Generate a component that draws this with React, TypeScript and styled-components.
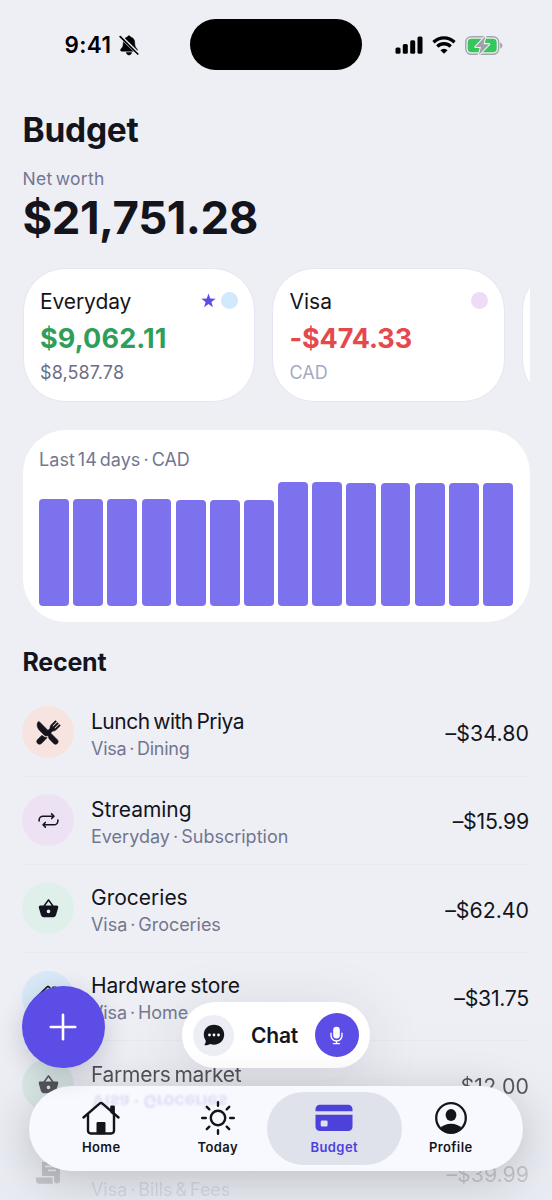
import React from "react";
import styled, { createGlobalStyle } from "styled-components";
import { IoRestaurant, IoRepeatOutline, IoBasket, IoHome } from "react-icons/io5";

const GlobalStyle = createGlobalStyle`
  * { box-sizing: border-box; }
  body { margin: 0; background: #eeeff5; font-family: Inter, "Liberation Sans", sans-serif; color: #14151c; }
`;

const Screen = styled.main`
  position: relative;
  width: 552px;
  height: 1200px;
  overflow: hidden;
  background: #eeeff5;
`;

const Label = styled.span<{ $size: number; $line: number; $color?: string; $weight?: number; $track?: number; $space?: number }>`
  display: block;
  white-space: nowrap;
  min-height: ${(p) => p.$line}px;
  font-size: ${(p) => p.$size}px;
  line-height: ${(p) => p.$line}px;
  color: ${(p) => p.$color ?? "#14151c"};
  font-weight: ${(p) => p.$weight ?? 400};
  letter-spacing: ${(p) => p.$track ?? 0}px;
  word-spacing: ${(p) => p.$space ?? -2}px;
  font-feature-settings: "calt" 0;
`;

/* Status bar */
const StatusBar = styled.header`
  display: grid;
  grid-template-columns: 190px 172px 190px;
  align-items: center;
  height: 89px;
`;
const StatusLeft = styled.div`
  display: flex;
  align-items: center;
  gap: 7.5px;
  padding-left: 64.5px;
  padding-top: 1px;
`;
const Island = styled.div`
  height: 51px;
  border-radius: 26px;
  background: #000;
`;
const StatusRight = styled.div`
  display: flex;
  align-items: center;
  gap: 9px;
  padding-left: 33px;
  padding-top: 1px;
`;

/* Page */
const Content = styled.div`
  display: flex;
  flex-direction: column;
  padding: 19.4px 22.5px 0;
`;
const Heading = styled.h1`
  margin: 0 0 14.2px;
  font-size: 33.5px;
  line-height: 44px;
  font-weight: 660;
  letter-spacing: -0.25px;
`;
const NetWorth = styled.section`
  display: flex;
  flex-direction: column;
  gap: 2.9px;
`;
const Accounts = styled.section`
  display: flex;
  gap: 17px;
  margin-top: 24.2px;
  overflow: hidden;
`;
const AccountCard = styled.article`
  flex: 0 0 232.5px;
  height: 134px;
  padding: 20px 16px 0 16.5px;
  border: 1.5px solid #e4e6f1;
  border-radius: 42px;
  background: #fff;
`;
const AccountHead = styled.div`
  display: flex;
  justify-content: space-between;
  align-items: center;
  margin-bottom: 7px;
`;
const Marks = styled.div`
  display: flex;
  align-items: center;
  gap: 5.5px;
  padding-bottom: 3px;
`;
const Dot = styled.i<{ $color: string }>`
  width: 17px;
  height: 17px;
  border-radius: 50%;
  background: ${(p) => p.$color};
`;
const AccountSub = styled.div`
  margin-top: 5px;
`;

const ChartCard = styled.section`
  height: 191.4px;
  margin-top: 28.6px;
  padding: 17.6px 16.6px 0;
  border-radius: 43px;
  background: #fff;
`;
const Bars = styled.div`
  display: flex;
  align-items: flex-end;
  gap: 4.2px;
  height: 123.5px;
  margin-top: 10.2px;
`;
const Bar = styled.div`
  flex: 1;
  border-radius: 4px;
  background: #7d72ed;
`;

const SectionTitle = styled.h2`
  margin: 24.4px 0 10.6px;
  font-size: 25px;
  line-height: 32px;
  font-weight: 660;
  letter-spacing: -0.25px;
`;
const Row = styled.div<{ $fade?: number }>`
  display: flex;
  align-items: flex-start;
  height: 88.2px;
  flex: none;
  border-bottom: 1px solid #e8e9ef;
  opacity: ${(p) => p.$fade ?? 1};
`;
const RowIcon = styled.div<{ $color: string }>`
  display: flex;
  align-items: center;
  justify-content: center;
  width: 52px;
  height: 52px;
  margin: 17.4px 17px 0 -0.5px;
  border-radius: 50%;
  background: ${(p) => p.$color};
  color: #14151c;
`;
const RowText = styled.div`
  flex: 1;
  padding-top: 19.2px;
`;
const RowSub = styled.div`
  margin-top: 1px;
`;
const RowAmount = styled.div`
  padding: 30.6px 0.5px 0 0;
`;

/* Floating layer */
const BottomFade = styled.div`
  position: absolute;
  inset: 1000px 0 0;
  background: linear-gradient(rgba(228, 231, 240, 0), rgba(224, 228, 236, 0.4));
`;
const Fab = styled.button`
  position: absolute;
  left: 22px;
  top: 985.5px;
  display: flex;
  align-items: center;
  justify-content: center;
  width: 82.6px;
  height: 82.6px;
  padding: 0;
  border: 0;
  border-radius: 50%;
  background: #5b4de6;
  box-shadow: 0 8px 26px rgba(40, 42, 70, 0.2);
`;
const ChatPill = styled.div`
  position: absolute;
  left: 182px;
  top: 1002px;
  display: flex;
  align-items: center;
  justify-content: space-between;
  width: 188px;
  height: 66px;
  padding: 0 11px;
  border-radius: 33px;
  background: #fff;
  box-shadow: 0 8px 60px rgba(40, 42, 60, 0.12);
`;
const ChatLabel = styled.div`
  padding-top: 2px;
`;
const RoundButton = styled.div<{ $size: number; $color: string }>`
  display: flex;
  align-items: center;
  justify-content: center;
  width: ${(p) => p.$size}px;
  height: ${(p) => p.$size}px;
  border-radius: 50%;
  background: ${(p) => p.$color};
`;
const TabBar = styled.nav`
  position: absolute;
  left: 29px;
  top: 1086px;
  display: grid;
  grid-template-columns: repeat(4, 116.5px);
  justify-content: center;
  width: 494px;
  height: 85px;
  padding-top: 6px;
  border-radius: 42.5px;
  background: #f8f9fe;
  box-shadow: 0 8px 44px rgba(30, 32, 42, 0.22);
`;
const Reflection = styled.span`
  position: absolute;
  left: 62.5px;
  top: 3px;
  font-size: 18px;
  line-height: 24px;
  font-weight: 700;
  color: #dedff6;
  transform: scaleY(-1);
  filter: blur(0.8px);
  white-space: nowrap;
  letter-spacing: -0.2px;
`;
const Tab = styled.div<{ $active?: boolean }>`
  position: relative;
  display: flex;
  flex-direction: column;
  align-items: center;
  height: 73px;
  margin: 0 ${(p) => (p.$active ? -9 : 0)}px;
  padding-top: 8.4px;
  gap: 1.8px;
  border-radius: 36.5px;
  background: ${(p) => (p.$active ? "#dfe1eb" : "transparent")};
  color: ${(p) => (p.$active ? "#4d41dc" : "#14151c")};
`;
const TabIcon = styled.div`
  display: flex;
  align-items: center;
  height: 36px;
`;
const TabLabel = styled.span`
  font-size: 13px;
  line-height: 18px;
  font-weight: 600;
  letter-spacing: 0.4px;
`;

const BellOff = () => (
  <svg width="20" height="21" viewBox="0 0 20 21">
    <path d="M10 .8c-.9 0-1.500.6-1.600 1.300C5.600 2.900 4.300 5 4.300 7.500c0 4-1 5-2.200 6.300-.9 1-.8 2.400.6 2.400h14.600c1.400 0 1.500-1.400.6-2.400-1.200-1.300-2.200-2.300-2.200-6.300 0-2.500-1.300-4.600-4.100-5.400C11.500 1.400 10.900.8 10 .8zM7.300 17.500h5.400c-.2 1.500-1.300 2.500-2.700 2.500s-2.500-1-2.700-2.500z" fill="#000" stroke="#000" strokeWidth="0.5" />
    <path d="M1.800 1.700 19.600 19" stroke="#eeeff5" strokeWidth="3.4" />
    <path d="M1.200 1.700 18.800 19" stroke="#000" strokeWidth="1.7" strokeLinecap="round" />
  </svg>
);
const Signal = () => (
  <svg width="28" height="18" viewBox="0 0 28 18">
    <rect x="0.5" y="11.500" width="5" height="6.300" rx="1.5" />
    <rect x="7.8" y="8" width="5" height="9.800" rx="1.5" />
    <rect x="15.2" y="4.200" width="5" height="13.600" rx="1.5" />
    <rect x="22.5" y="0.500" width="5" height="17.300" rx="1.5" />
  </svg>
);
const Wifi = () => (
  <svg width="24" height="18" viewBox="0 0 24 18" fill="none" stroke="#000" strokeWidth="3.3">
    <path d="M1.500 6.200a15 15 0 0 1 21 0" />
    <path d="M5.300 10.500a9.500 9.500 0 0 1 13.400 0" />
    <path d="M12 17.800 8.400 14.200a5 5 0 0 1 7.200 0z" fill="#000" stroke="none" />
  </svg>
);
const Battery = () => (
  <svg width="38" height="19" viewBox="0 0 38 19">
    <rect x="0.7" y="0.7" width="33" height="17.6" rx="5.6" fill="none" stroke="#a5a6ab" strokeWidth="1.4" />
    <path d="M35.200 6.500c1.500.5 2.200 1.600 2.200 3s-.7 2.500-2.200 3z" fill="#a5a6ab" />
    <rect x="2.7" y="2.7" width="29" height="13.6" rx="3.8" fill="#34c759" />
    <path d="M20.300.3 10.400 10.900h5.600L13.900 18.700 24.200 8.200H18.500z" fill="#9fa1a6" stroke="#eeeff5" strokeWidth="2.2" strokeLinejoin="round" paintOrder="stroke" />
  </svg>
);
const Star = () => (
  <svg width="15" height="15" viewBox="0 0 24 24" fill="#5b4de6">
    <path d="M12 .8 14.800 8.900 23.500 9.100 16.600 14.300 19.100 22.700 12 17.700 4.900 22.700 7.400 14.300.5 9.100 9.200 8.900z" />
  </svg>
);
const Scroll = () => (
  <svg width="24" height="24" viewBox="0 0 24 24" fill="#14151c">
    <path fillRule="evenodd" d="M6 1h18v18.500a3 3 0 0 1-6 0V15H6zM9 4.500v1.800h11V4.500zm3 4v1.800h8V8.500z" />
    <path d="M0 16.500h16.500v3.500c0 1 .3 2 .9 2.700H3.500A3.500 3.500 0 0 1 0 19.200z" />
  </svg>
);
const ChatBubble = () => (
  <svg width="22" height="22" viewBox="0 0 22 22">
    <path d="M11 .8C5.200.8.800 5 .8 10.500c0 2.300.7 4.200 1.900 5.900.2 1.500-.2 2.700-1 3.800-.4.600-.1 1.100.6 1.100 1.900 0 3.500-.4 4.800-1.300 1.200.5 2.500.7 3.900.7 5.800 0 10.200-4.400 10.200-10.100S16.800.8 11 .8z" fill="#14151c" />
    <circle cx="6.5" cy="11" r="1.4" fill="#fff" />
    <circle cx="11" cy="11" r="1.4" fill="#fff" />
    <circle cx="15.5" cy="11" r="1.4" fill="#fff" />
  </svg>
);
const Mic = () => (
  <svg width="13" height="19" viewBox="0 0 13 19" fill="none" stroke="#fff" strokeWidth="1.4" strokeLinecap="round">
    <rect x="3.2" y="0.7" width="6.6" height="11.8" rx="3.3" fill="#fff" stroke="none" />
    <path d="M1 7.200V9.500a5.500 5.500 0 0 0 11 0V7.200M6.500 15v2.600M3.500 17.600h6" />
  </svg>
);
const HomeTab = () => (
  <svg width="38" height="34" viewBox="0 0 38 34" fill="none" stroke="#14151c" strokeWidth="2.4" strokeLinecap="round" strokeLinejoin="round">
    <path d="M1.500 16.500 17.500 2.600a2.300 2.300 0 0 1 3 0L36.500 16.500" />
    <path d="M6 13.500v16.300a2.700 2.700 0 0 0 2.700 2.700h20.600a2.700 2.700 0 0 0 2.700-2.700V13.500" />
    <path d="M29.400 5.800v5l2.300 2V5.800z" fill="#14151c" />
    <path d="M15.700 32V22.300h6.600V32z" fill="#14151c" />
  </svg>
);
const SunTab = () => (
  <svg width="36" height="36" viewBox="0 0 36 36" fill="none" stroke="#14151c" strokeWidth="2.4" strokeLinecap="round">
    <circle cx="18" cy="18" r="7.2" />
    <path d="M18 2.200v3.600M18 30.200v3.600M2.200 18h3.600M30.200 18h3.600M6.800 6.800l2.500 2.500M26.700 26.700l2.500 2.500M6.800 29.200l2.500-2.500M26.700 9.300l2.500-2.500" />
  </svg>
);
const CardTab = () => (
  <svg width="38" height="28" viewBox="0 0 38 28" fill="#4d41dc">
    <path d="M.5 7.200V5A4.300 4.300 0 0 1 4.800.7h28.400A4.300 4.300 0 0 1 37.500 5v2.200z" />
    <path fillRule="evenodd" d="M.5 10.800h37v12a4.300 4.300 0 0 1-4.300 4.300H4.800A4.300 4.300 0 0 1 .5 22.800zM7 16.400a1.300 1.300 0 0 0-1.300 1.300v3.500A1.300 1.300 0 0 0 7 22.500h4.300a1.300 1.300 0 0 0 1.300-1.300v-3.500a1.300 1.300 0 0 0-1.300-1.300z" />
  </svg>
);
const ProfileTab = () => (
  <svg width="34" height="34" viewBox="0 0 34 34">
    <circle cx="17" cy="17" r="14.8" fill="none" stroke="#14151c" strokeWidth="2.3" />
    <ellipse cx="17" cy="14" rx="5.4" ry="6.1" fill="#14151c" />
    <path d="M6.300 27.300C8.500 24.200 12.500 22.700 17 22.700s8.500 1.500 10.700 4.600A15 15 0 0 1 17 32a15 15 0 0 1-10.700-4.700z" fill="#14151c" />
  </svg>
);

const bars = [106.3, 106.3, 106.3, 106.3, 105.7, 105.7, 105.7, 123.5, 123.5, 123, 123, 122.5, 122.5, 122.5];

type Entry = {
  title: string;
  sub: string;
  amount: string;
  color: string;
  icon: React.ReactNode;
  titleTrack: number;
  subTrack: number;
  amountTrack: number;
  fade?: number;
};

const rows: Entry[] = [
  { title: "Lunch with Priya", sub: "Visa · Dining", amount: "–$34.80", color: "#f7e4e0", icon: <IoRestaurant size={25} strokeWidth={12} />, titleTrack: -0.5, subTrack: -0.25, amountTrack: 0.1 },
  { title: "Streaming", sub: "Everyday · Subscription", amount: "–$15.99", color: "#ece2f4", icon: <IoRepeatOutline size={25} />, titleTrack: -0.05, subTrack: 0, amountTrack: -0.2 },
  { title: "Groceries", sub: "Visa · Groceries", amount: "–$62.40", color: "#dfefea", icon: <IoBasket size={25} />, titleTrack: 0, subTrack: -0.05, amountTrack: 0 },
  { title: "Hardware store", sub: "Visa · Home", amount: "–$31.75", color: "#d8e8f6", icon: <IoHome size={26} />, titleTrack: -0.15, subTrack: -0.1, amountTrack: -0.3 },
  { title: "Farmers market", sub: "", amount: "–$12.00", color: "#d3e6df", icon: <IoBasket size={25} />, titleTrack: -0.28, subTrack: 0, amountTrack: 0.1, fade: 0.84 },
  { title: "", sub: "Visa · Bills & Fees", amount: "–$39.99", color: "transparent", icon: <Scroll />, titleTrack: 0, subTrack: -0.05, amountTrack: 0, fade: 0.27 },
];

export default function App() {
  return (
    <Screen>
      <GlobalStyle />
      <StatusBar>
        <StatusLeft>
          <Label $size={22.5} $line={28} $weight={570} $color="#000" $track={0.4}>9:41</Label>
          <BellOff />
        </StatusLeft>
        <Island />
        <StatusRight>
          <Signal />
          <Wifi />
          <Battery />
        </StatusRight>
      </StatusBar>
      <Content>
        <Heading>Budget</Heading>
        <NetWorth>
          <Label $size={17.5} $line={24} $color="#73768f" $track={0.3}>Net worth</Label>
          <Label $size={45.5} $line={50} $weight={680} $track={-0.5}>$21,751.28</Label>
        </NetWorth>
        <Accounts>
          <AccountCard>
            <AccountHead>
              <Label $size={21} $line={26} $track={-0.1}>Everyday</Label>
              <Marks><Star /><Dot $color="#d2e8fb" /></Marks>
            </AccountHead>
            <Label $size={27} $line={34} $weight={680} $color="#2f9e5b" $track={0.15}>$9,062.11</Label>
            <AccountSub><Label $size={18} $line={24} $color="#6b6e88" $track={0.1}>$8,587.78</Label></AccountSub>
          </AccountCard>
          <AccountCard>
            <AccountHead>
              <Label $size={21} $line={26}>Visa</Label>
              <Marks><Dot $color="#ecdcf6" /></Marks>
            </AccountHead>
            <Label $size={27} $line={34} $weight={680} $color="#e5484d" $track={-0.1}>-$474.33</Label>
            <AccountSub><Label $size={18} $line={24} $color="#a6aac3">CAD</Label></AccountSub>
          </AccountCard>
          <AccountCard />
        </Accounts>
        <ChartCard>
          <Label $size={18} $line={24} $color="#73768f">Last 14 days · CAD</Label>
          <Bars>{bars.map((h, i) => <Bar key={i} style={{ height: h }} />)}</Bars>
        </ChartCard>
        <SectionTitle>Recent</SectionTitle>
        {rows.map((r) => (
          <Row key={r.amount} $fade={r.fade}>
            <RowIcon $color={r.color}>{r.icon}</RowIcon>
            <RowText>
              <Label $size={21} $line={28} $track={r.titleTrack} $space={-1.8}>{r.title}</Label>
              <RowSub>
                <Label $size={18} $line={24} $color="#73768f" $track={r.subTrack}>{r.sub}</Label>
              </RowSub>
            </RowText>
            <RowAmount><Label $size={21.3} $line={28} $track={r.amountTrack}>{r.amount}</Label></RowAmount>
          </Row>
        ))}
      </Content>
      <BottomFade />
      <ChatPill>
        <RoundButton $size={41} $color="#edeef5"><ChatBubble /></RoundButton>
        <ChatLabel><Label $size={21} $line={28} $weight={570} $track={-0.2}>Chat</Label></ChatLabel>
        <RoundButton $size={44} $color="#5b4de6"><Mic /></RoundButton>
      </ChatPill>
      <TabBar>
        <Reflection aria-hidden>Visa · Groceries</Reflection>
        <Tab><TabIcon><HomeTab /></TabIcon><TabLabel>Home</TabLabel></Tab>
        <Tab><TabIcon><SunTab /></TabIcon><TabLabel>Today</TabLabel></Tab>
        <Tab $active><TabIcon><CardTab /></TabIcon><TabLabel>Budget</TabLabel></Tab>
        <Tab><TabIcon><ProfileTab /></TabIcon><TabLabel>Profile</TabLabel></Tab>
      </TabBar>
      <Fab aria-label="Add">
        <svg width="28" height="28" viewBox="0 0 28 28" stroke="#fff" strokeWidth="2.6" strokeLinecap="round">
          <path d="M14 1.800v24.400M1.800 14h24.400" />
        </svg>
      </Fab>
    </Screen>
  );
}
